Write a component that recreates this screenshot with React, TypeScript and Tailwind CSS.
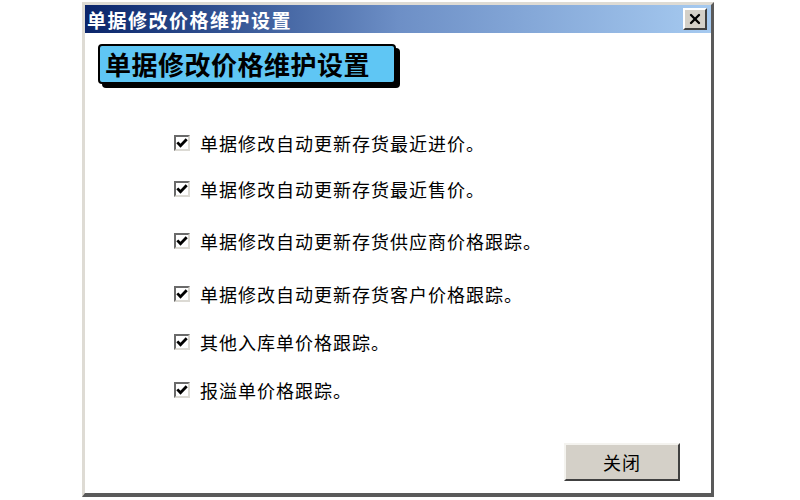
import { X } from "lucide-react";

const FONT = { fontFamily: '"Noto Sans CJK SC", "Noto Sans", sans-serif' };

const OPTIONS: { label: string; gap: string }[] = [
  { label: "单据修改自动更新存货最近进价。", gap: "mt-[47px]" },
  { label: "单据修改自动更新存货最近售价。", gap: "mt-[22px]" },
  { label: "单据修改自动更新存货供应商价格跟踪。", gap: "mt-[28px]" },
  { label: "单据修改自动更新存货客户价格跟踪。", gap: "mt-[29px]" },
  { label: "其他入库单价格跟踪。", gap: "mt-[24px]" },
  { label: "报溢单价格跟踪。", gap: "mt-[24px]" },
];

/* --- classic sunken checkbox ----------------------------------------- */
function CheckBox() {
  return (
    <span className="flex h-[16px] w-[16px] shrink-0 items-center justify-center border-2 border-t-[#6a6a6a] border-l-[#6a6a6a] border-r-[#dcdad4] border-b-[#dcdad4] bg-white">
      <svg width="12" height="12" viewBox="0 0 12 12">
        <path d="M1.3 5.4 L4.5 8.8 L10.7 2.2" fill="none" stroke="#000" strokeWidth="2.8" />
      </svg>
    </span>
  );
}

export default function App() {
  return (
    <div className="h-[500px] w-[800px] overflow-hidden bg-white pl-[82px] pt-[2px]" style={FONT}>
      <div className="flex h-[495px] w-[632px] flex-col border-l-[3px] border-t-[3px] border-r-[3px] border-b-[4px] border-l-[#dedbd4] border-t-[#dedbd4] border-r-[#5a5a5a] border-b-[#5a5a5a] bg-white">
        {/* Title bar */}
        <div className="flex h-[28px] shrink-0 items-center justify-between bg-gradient-to-r from-[#0a246a] via-[#6d8fc6] to-[#a6caf0] pl-[2px] pr-[4px]">
          <span className="text-[19px] font-bold leading-none tracking-[1.5px] text-white">单据修改价格维护设置</span>
          <button className="flex h-[22px] w-[24px] items-center justify-center border-2 border-t-white border-l-white border-r-[#404040] border-b-[#404040] bg-[#d4d0c8]">
            <X size={16} strokeWidth={3.5} color="#000" />
          </button>
        </div>

        {/* Body */}
        <div className="flex flex-1 flex-col">
          <div className="ml-[13px] mt-[11px] flex h-[40px] w-[298px] items-center rounded-[4px] border-2 border-black bg-[#5fc6f4] pl-[5px] shadow-[4px_4px_0_#000]">
            <span className="text-[26px] font-bold leading-none tracking-[0.5px] text-black">单据修改价格维护设置</span>
          </div>

          <div className="flex flex-col pl-[89px]">
            {OPTIONS.map((o) => (
              <label key={o.label} className={`${o.gap} flex h-[24px] items-center gap-[10px]`}>
                <CheckBox />
                <span className="text-[18px] leading-none tracking-[1px] text-black">{o.label}</span>
              </label>
            ))}
          </div>

          <div className="mt-[41px] flex justify-end pr-[31px]">
            <button className="flex h-[38px] w-[116px] items-center justify-center border-2 border-t-[#f4f3ef] border-l-[#f4f3ef] border-r-[#404040] border-b-[#404040] bg-[#d4d0c8] text-[18px] tracking-[1px] text-black">
              关闭
            </button>
          </div>
        </div>
      </div>
    </div>
  );
}
